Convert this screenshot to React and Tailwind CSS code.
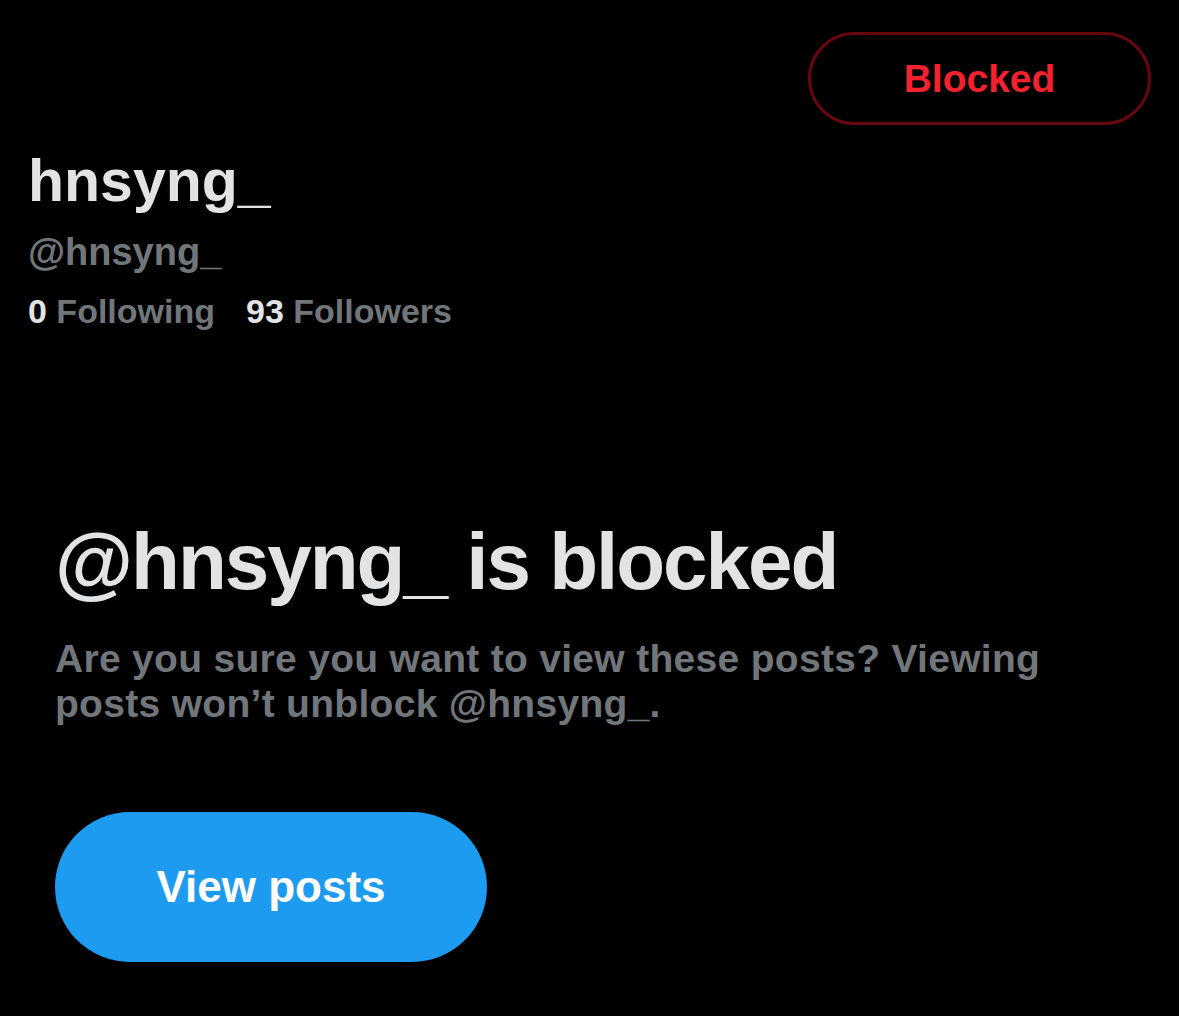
export default function App() {
  const font = { fontFamily: '"Liberation Sans", Arial, sans-serif' };

  return (
    <div
      className="w-full h-[1016px] bg-black text-[#e2e3e4] overflow-hidden"
      style={font}
    >
      {/* top bar */}
      <div className="flex justify-end pt-[32px] pr-[28px]">
        <button
          type="button"
          className="w-[343px] h-[93px] rounded-full border-[3px] border-[#67070f] text-[#f4212e] text-[39px] font-bold leading-none flex items-center justify-center"
        >
          Blocked
        </button>
      </div>

      {/* profile info */}
      <div className="px-[28px] mt-[27px]">
        <h1 className="text-[59px] font-bold leading-none">hnsyng_</h1>
        <p className="text-[38px] font-bold leading-none text-[#71767b] mt-[22px]">
          @hnsyng_
        </p>
        <div className="flex gap-[31px] text-[34px] font-bold leading-none mt-[23px]">
          <span>
            0 <span className="text-[#71767b]">Following</span>
          </span>
          <span>
            93 <span className="text-[#71767b]">Followers</span>
          </span>
        </div>
      </div>

      {/* blocked notice */}
      <div className="px-[55px] mt-[194px]">
        <h2 className="text-[80px] font-bold leading-none tracking-[-2px]">
          @hnsyng_ is blocked
        </h2>
        <p className="text-[39px] font-bold leading-[45px] tracking-[0.3px] text-[#71767b] mt-[34px]">
          Are you sure you want to view these posts? Viewing posts won’t
          unblock @hnsyng_.
        </p>
        <button
          type="button"
          className="mt-[86px] w-[432px] h-[150px] rounded-full bg-[#1d9bf0] text-white text-[44px] font-bold leading-none flex items-center justify-center"
        >
          View posts
        </button>
      </div>
    </div>
  );
}
